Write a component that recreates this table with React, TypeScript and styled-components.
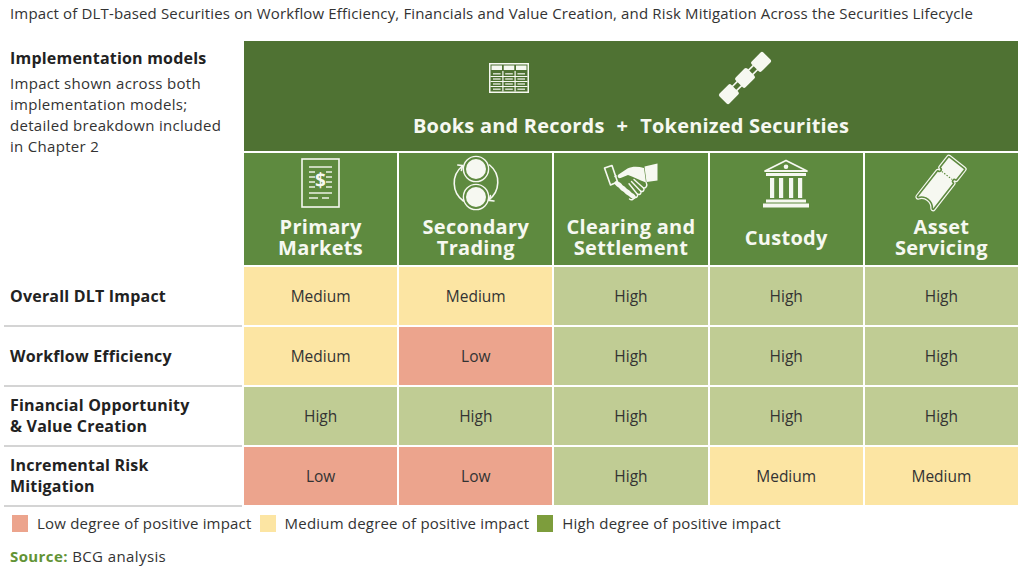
import React from "react";
import styled, { createGlobalStyle } from "styled-components";

const GlobalStyle = createGlobalStyle`
  html, body { margin: 0; padding: 0; background: #ffffff; overflow: hidden; }
  body { font-family: "Open Sans", "Liberation Sans", sans-serif; color: #333; }
`;

const Page = styled.div`
  width: 1024px;
  height: 566px;
  padding-top: 4px;
  box-sizing: border-box;
`;

const Title = styled.div`
  margin-left: 10px;
  font-size: 15px;
  letter-spacing: 0.15px;
  line-height: 18px;
  color: #333;
  white-space: nowrap;
`;

const Grid = styled.div`
  margin-top: 19px;
  width: 1018px;
  display: grid;
  grid-template-columns: 242px repeat(5, 1fr);
  grid-template-rows: 110px 112px repeat(4, 58px);
  gap: 2px;
`;

const Intro = styled.div`
  grid-column: 1;
  grid-row: 1 / span 2;
  padding: 7px 0 0 10px;
`;

const IntroHeading = styled.div`
  font-weight: 700;
  font-size: 16px;
  letter-spacing: 0.2px;
  line-height: 21px;
  color: #222;
`;

const IntroText = styled.div`
  margin-top: 4px;
  font-size: 15px;
  letter-spacing: 0.3px;
  line-height: 21px;
  color: #333;
`;

const Band = styled.div`
  grid-column: 2 / span 5;
  background: #4f7233;
  display: grid;
  grid-template-columns: auto auto auto;
  grid-template-rows: 50px 24px;
  row-gap: 11px;
  column-gap: 12px;
  justify-content: center;
  align-content: start;
  justify-items: center;
  padding-top: 12px;
  color: #f6f8f1;
`;

const BandIcon = styled.div`
  display: flex;
  align-items: center;
  justify-content: center;
`;

const BandText = styled.div`
  font-weight: 700;
  font-size: 20px;
  letter-spacing: 0.2px;
  line-height: 24px;
  white-space: nowrap;
`;

const ColHeader = styled.div`
  background: #5e8a3f;
  display: flex;
  flex-direction: column;
  align-items: center;
  padding: 4px 0 7px;
`;

const IconBox = styled.div`
  height: 52px;
  display: flex;
  align-items: center;
  justify-content: center;
`;

const ColTitle = styled.div`
  margin-top: 7px;
  height: 42px;
  display: flex;
  align-items: center;
  text-align: center;
  font-weight: 700;
  font-size: 20px;
  letter-spacing: 0.3px;
  line-height: 21px;
  color: #f6f8f1;
  white-space: nowrap;
`;

const RowLabel = styled.div`
  margin-left: 4px;
  padding-left: 6px;
  display: flex;
  align-items: center;
  font-weight: 700;
  font-size: 16px;
  letter-spacing: 0.2px;
  line-height: 21px;
  color: #222;
  box-shadow: 0 2px 0 #d4d4d4;
`;

type Level = "Low" | "Medium" | "High";

const levelColor: Record<Level, string> = {
  Low: "#eca48d",
  Medium: "#fce5a3",
  High: "#c0cc94",
};

const Cell = styled.div<{ $level: Level }>`
  background: ${(p) => levelColor[p.$level]};
  display: flex;
  align-items: center;
  justify-content: center;
  font-size: 15.5px;
  color: #333;
`;

const Legend = styled.div`
  margin: 8px 0 0 12px;
  height: 20px;
  display: flex;
  align-items: center;
`;

const LegendItem = styled.div`
  display: flex;
  align-items: center;
  margin-right: 8px;
  font-size: 15px;
  letter-spacing: 0.2px;
  color: #333;
  white-space: nowrap;
`;

const Swatch = styled.span<{ $color: string }>`
  width: 16px;
  height: 17px;
  background: ${(p) => p.$color};
  margin-right: 9px;
`;

const Source = styled.div`
  margin: 13px 0 0 10px;
  font-size: 15px;
  letter-spacing: 0.4px;
  line-height: 20px;
  color: #333;
`;

const SourceLabel = styled.span`
  font-weight: 700;
  color: #629335;
`;

const W = "#f6f8f1";
const G = "#5e8a3f";

const TableIcon = () => (
  <svg width="40" height="30" viewBox="0 0 40 30">
    <rect x="0.75" y="0.75" width="38.5" height="28.5" fill="none" stroke={W} strokeWidth="1.5" />
    <rect x="2.5" y="2.5" width="10.5" height="4.5" fill={W} />
    <rect x="14.75" y="2.5" width="10.5" height="4.5" fill={W} />
    <rect x="27" y="2.5" width="10.5" height="4.5" fill={W} />
    <line x1="13.9" y1="8" x2="13.9" y2="28.5" stroke={W} strokeWidth="1.2" />
    <line x1="26.1" y1="8" x2="26.1" y2="28.5" stroke={W} strokeWidth="1.2" />
    {[13.5, 18.5, 23.5].map((y) => (
      <line key={y} x1="1.5" y1={y} x2="38.5" y2={y} stroke={W} strokeWidth="1.2" />
    ))}
    {[10.8, 16, 21, 26.2].map((y) =>
      [4, 16.2, 28.4].map((x) => (
        <line key={`${x}-${y}`} x1={x} y1={y} x2={x + 7.6} y2={y} stroke={W} strokeWidth="1.4" opacity="0.85" />
      ))
    )}
  </svg>
);

const ChainIcon = () => (
  <svg width="50" height="50" viewBox="0 0 50 50" style={{ overflow: "visible" }}>
    <g transform="rotate(-45 25 25)">
      <rect x="-6" y="18" width="16.5" height="14" rx="2" fill={W} />
      <rect x="16.8" y="18" width="16.5" height="14" rx="2" fill={W} />
      <rect x="39.5" y="18" width="16.5" height="14" rx="2" fill={W} />
      <rect x="6" y="22" width="15" height="6" rx="3" fill="none" stroke={W} strokeWidth="1.6" />
      <rect x="29" y="22" width="15" height="6" rx="3" fill="none" stroke={W} strokeWidth="1.6" />
    </g>
  </svg>
);

const DocIcon = () => (
  <svg width="39" height="50" viewBox="0 0 39 50">
    <rect x="1" y="1" width="37" height="48" fill="none" stroke={W} strokeWidth="1.6" />
    <g stroke={W} strokeWidth="1.4">
      <line x1="8" y1="9" x2="31" y2="9" />
      <line x1="8" y1="14" x2="14" y2="14" />
      <line x1="25" y1="14" x2="31" y2="14" />
      <line x1="8" y1="19" x2="14" y2="19" />
      <line x1="25" y1="19" x2="31" y2="19" />
      <line x1="8" y1="24" x2="14" y2="24" />
      <line x1="25" y1="24" x2="31" y2="24" />
      <line x1="8" y1="29" x2="14" y2="29" />
      <line x1="25" y1="29" x2="31" y2="29" />
      <line x1="8" y1="35" x2="31" y2="35" />
      <line x1="8" y1="40" x2="17" y2="40" />
      <line x1="21" y1="40" x2="28" y2="40" />
    </g>
    <text x="19.5" y="29" textAnchor="middle" fontSize="19" fontWeight="700" fill={W} fontFamily="Open Sans, sans-serif">
      $
    </text>
  </svg>
);

const TradeIcon = () => (
  <svg width="56" height="56" viewBox="0 0 56 56">
    <circle cx="28" cy="14" r="10" fill={W} />
    <circle cx="28" cy="14" r="12.6" fill="none" stroke={W} strokeWidth="1.4" />
    <circle cx="28" cy="42" r="10" fill={W} />
    <circle cx="28" cy="42" r="12.6" fill="none" stroke={W} strokeWidth="1.4" />
    <g fill="none" stroke={W} strokeWidth="1.6" strokeLinecap="round" strokeLinejoin="round">
      <path d="M 15.4 46 A 22 22 0 0 1 14.4 11" />
      <path d="M 13.4 15.4 L 14.6 10.6 L 9.8 10" />
      <path d="M 41.6 10 A 22 22 0 0 1 40.6 45" />
      <path d="M 46 46 L 41.2 45.4 L 42.4 40.6" />
    </g>
  </svg>
);

const HandshakeIcon = () => (
  <svg width="56" height="40" viewBox="0 0 56 40">
    <path d="M1.5 5 L9 2.5 L14.5 19 L7.5 22 Z" fill="none" stroke={W} strokeWidth="1.6" strokeLinejoin="round" />
    <path d="M41.5 3.5 L54.5 0.5 L54.5 17.5 L43.5 19 Z" fill={W} />
    <path
      d="M41 5 C35 3.2 29 3.2 24.5 5.5 L15.5 11.5 C13.8 13 15 15.8 17.6 15 L25 12 C31 14 37 17.5 43 19.5 Z"
      fill={W}
    />
    <path d="M13.5 12.5 L11.5 14" stroke={W} strokeWidth="1.4" fill="none" />
    <g fill={W}>
      <ellipse cx="15.5" cy="21.5" rx="4.6" ry="2.4" transform="rotate(38 15.5 21.5)" />
      <ellipse cx="20" cy="25.5" rx="4.8" ry="2.5" transform="rotate(38 20 25.5)" />
      <ellipse cx="24.6" cy="29.2" rx="4.8" ry="2.5" transform="rotate(38 24.6 29.2)" />
      <ellipse cx="29" cy="32.6" rx="4.4" ry="2.3" transform="rotate(38 29 32.6)" />
    </g>
    <g fill="none" stroke={W} strokeWidth="1.4" strokeLinecap="round" strokeLinejoin="round">
      <path d="M31 16.5 L40.5 25 C42 27 40 29.5 37.8 28" />
      <path d="M28.5 18.5 L37.5 28 C39 30 37 32.5 34.8 31" />
      <path d="M26 20.8 L34.2 31 C35.5 33 33.5 35.5 31.4 34" />
      <path d="M43.2 19.5 C44.5 22 43.5 25.5 40.5 25" />
      <path d="M31.5 34.2 C31 36.5 28.5 37.5 26.5 36" />
    </g>
  </svg>
);

const BankIcon = () => (
  <svg width="50" height="50" viewBox="0 0 50 50">
    <polygon points="25,2.5 46,13 4,13" fill="none" stroke={W} strokeWidth="1.8" strokeLinejoin="round" />
    <circle cx="25" cy="8.8" r="2.3" fill={W} />
    <rect x="5" y="15" width="40" height="3" fill={W} />
    {[9, 18, 28, 37].map((x) => (
      <rect key={x} x={x} y="20" width="4.2" height="20" fill={W} />
    ))}
    <rect x="5" y="41.5" width="40" height="3" fill={W} />
    <rect x="2" y="45.5" width="46" height="4" fill={W} />
  </svg>
);

const ticketPath =
  "M -25 -9.5 H 7 A 2.6 2.6 0 0 0 12.2 -9.5 H 25 V 9.5 H 12.2 A 2.6 2.6 0 0 0 7 9.5 H -25 A 11.5 11.5 0 0 0 -25 -9.5 Z";

const TicketIcon = () => (
  <svg width="52" height="54" viewBox="-26 -27 52 54" style={{ overflow: "visible" }}>
    <g transform="rotate(-52)">
      <path d={ticketPath} fill="none" stroke={W} strokeWidth="5.6" strokeLinejoin="round" />
      <path d={ticketPath} fill="none" stroke={G} strokeWidth="3.2" strokeLinejoin="round" />
      <path d={ticketPath} fill={W} />
      <line x1="9.6" y1="-6.5" x2="9.6" y2="6.5" stroke={G} strokeWidth="1.1" strokeDasharray="1.5 1.5" />
    </g>
  </svg>
);

const columns: { title: React.ReactNode; icon: React.ReactNode }[] = [
  { title: <>Primary<br />Markets</>, icon: <DocIcon /> },
  { title: <>Secondary<br />Trading</>, icon: <TradeIcon /> },
  { title: <>Clearing and<br />Settlement</>, icon: <HandshakeIcon /> },
  { title: <>Custody</>, icon: <BankIcon /> },
  { title: <>Asset<br />Servicing</>, icon: <TicketIcon /> },
];

const rows: { label: React.ReactNode; values: Level[] }[] = [
  { label: <>Overall DLT Impact</>, values: ["Medium", "Medium", "High", "High", "High"] },
  { label: <>Workflow Efficiency</>, values: ["Medium", "Low", "High", "High", "High"] },
  { label: <>Financial Opportunity<br />&amp; Value Creation</>, values: ["High", "High", "High", "High", "High"] },
  { label: <>Incremental Risk<br />Mitigation</>, values: ["Low", "Low", "High", "Medium", "Medium"] },
];

export default function App() {
  return (
    <Page>
      <GlobalStyle />
      <Title>
        Impact of DLT-based Securities on Workflow Efficiency, Financials and Value Creation, and Risk Mitigation Across the Securities Lifecycle
      </Title>
      <Grid>
        <Intro>
          <IntroHeading>Implementation models</IntroHeading>
          <IntroText>
            Impact shown across both
            <br />
            implementation models;
            <br />
            detailed breakdown included
            <br />
            in Chapter 2
          </IntroText>
        </Intro>
        <Band>
          <BandIcon><TableIcon /></BandIcon>
          <span />
          <BandIcon><ChainIcon /></BandIcon>
          <BandText>Books and Records</BandText>
          <BandText>+</BandText>
          <BandText>Tokenized Securities</BandText>
        </Band>
        {columns.map((c, i) => (
          <ColHeader key={i}>
            <IconBox>{c.icon}</IconBox>
            <ColTitle>
              <span>{c.title}</span>
            </ColTitle>
          </ColHeader>
        ))}
        {rows.map((r, ri) => (
          <React.Fragment key={ri}>
            <RowLabel>
              <span>{r.label}</span>
            </RowLabel>
            {r.values.map((v, vi) => (
              <Cell key={vi} $level={v}>
                {v}
              </Cell>
            ))}
          </React.Fragment>
        ))}
      </Grid>
      <Legend>
        <LegendItem>
          <Swatch $color="#eca48d" />
          Low degree of positive impact
        </LegendItem>
        <LegendItem>
          <Swatch $color="#fce5a3" />
          Medium degree of positive impact
        </LegendItem>
        <LegendItem>
          <Swatch $color="#7d9d3c" />
          High degree of positive impact
        </LegendItem>
      </Legend>
      <Source>
        <SourceLabel>Source:</SourceLabel> BCG analysis
      </Source>
    </Page>
  );
}
